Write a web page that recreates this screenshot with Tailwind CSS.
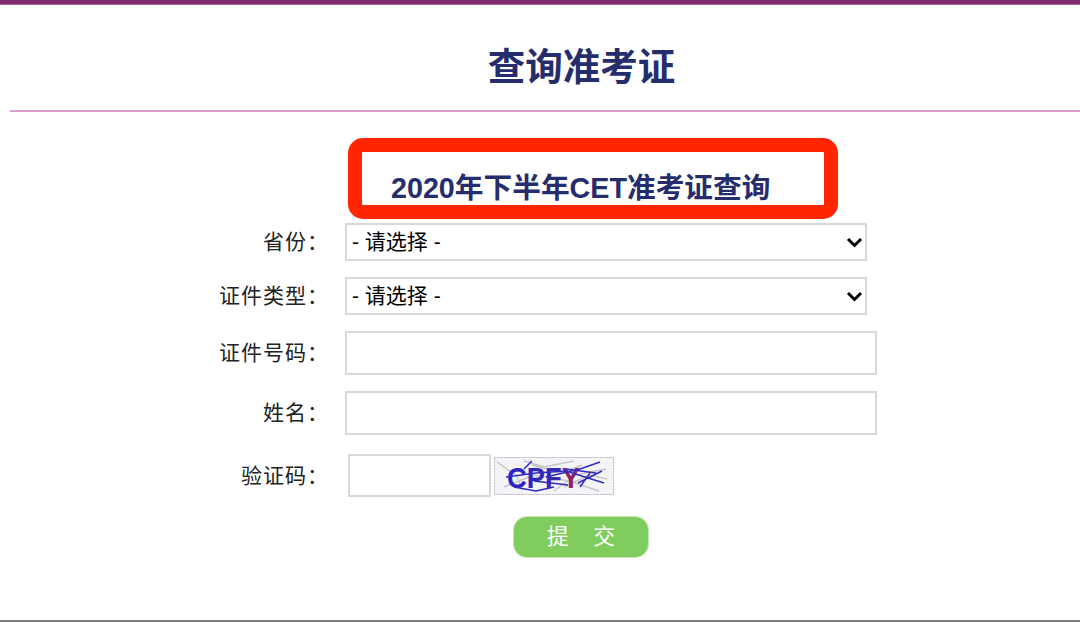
<!DOCTYPE html>
<html lang="zh-CN">
<head>
    <meta charset="UTF-8">
    <meta name="viewport" content="width=device-width, initial-scale=1.0">
    <title>查询准考证</title>
    <script src="https://cdn.jsdelivr.net/npm/@tailwindcss/browser@4"></script>
</head>
<body class="bg-white h-[622px] overflow-hidden font-['Liberation_Sans','Noto_Sans_CJK_SC',sans-serif] text-[#222]">
    <div class="h-[622px] flex flex-col">
        <div class="h-[5px] bg-[#7f2d6e] border-b border-[#a9629c]"></div>

        <!-- title -->
        <div class="ml-[10px] h-[107px] border-b-2 border-[#dc9ed0] flex justify-center pt-[35px] pl-[73px]">
            <h1 class="text-[37.5px] leading-[54px] font-bold text-[#262d6c] h-[54px]">查询准考证</h1>
        </div>

        <!-- red box -->
        <div class="ml-[348px] mt-[26px] w-[490px] h-[81px] border-[14px] border-[#ff2600] rounded-[15px]">
            <h2 class="ml-[29px] mt-[15px] text-[28.7px] leading-[42px] font-bold text-[#262d6c] whitespace-nowrap">2020年下半年CET准考证查询</h2>
        </div>

        <!-- form -->
        <form class="mt-[4px]">
            <div class="flex items-center h-[38px]">
                <label class="w-[331px] pr-[2px] text-right text-[21px] tracking-[1px]">省份：</label>
                <div class="relative ml-[14px] w-[522px] h-[38px]">
                    <select class="appearance-none w-full h-full border-2 border-[#d8d8d8] bg-white pl-[5px] text-[21px] text-black">
                        <option>- 请选择 -</option>
                    </select>
                    <svg class="absolute right-[4px] top-[14px] w-[17px] h-[11px]" viewBox="0 0 17 11" fill="none" stroke="#000" stroke-width="3"><path d="M2 2l6.5 6.5L15 2"/></svg>
                </div>
            </div>
            <div class="flex items-center h-[38px] mt-[16px]">
                <label class="w-[331px] pr-[2px] text-right text-[21px] tracking-[1px]">证件类型：</label>
                <div class="relative ml-[14px] w-[522px] h-[38px]">
                    <select class="appearance-none w-full h-full border-2 border-[#d8d8d8] bg-white pl-[5px] text-[21px] text-black">
                        <option>- 请选择 -</option>
                    </select>
                    <svg class="absolute right-[4px] top-[14px] w-[17px] h-[11px]" viewBox="0 0 17 11" fill="none" stroke="#000" stroke-width="3"><path d="M2 2l6.5 6.5L15 2"/></svg>
                </div>
            </div>
            <div class="flex items-center h-[44px] mt-[16px]">
                <label class="w-[331px] pr-[2px] text-right text-[21px] tracking-[1px]">证件号码：</label>
                <input type="text" class="ml-[14px] w-[532px] h-[44px] border-2 border-[#d8d8d8] bg-white">
            </div>
            <div class="flex items-center h-[44px] mt-[16px]">
                <label class="w-[331px] pr-[2px] text-right text-[21px] tracking-[1px]">姓名：</label>
                <input type="text" class="ml-[14px] w-[532px] h-[44px] border-2 border-[#d8d8d8] bg-white">
            </div>
            <div class="flex items-center h-[43px] mt-[19px]">
                <label class="w-[331px] pr-[2px] text-right text-[21px] tracking-[1px]">验证码：</label>
                <input type="text" class="ml-[17px] w-[143px] h-[43px] border-2 border-[#d8d8d8] bg-white">
                <!-- captcha -->
                <svg class="ml-[3px] w-[120px] h-[38px]" viewBox="0 0 120 38" fill="none">
                    <defs>
                        <linearGradient id="captchaInk" x1="0" x2="1" y1="0" y2="0">
                            <stop offset="0" stop-color="#2a22c0"/>
                            <stop offset="0.7" stop-color="#3a2ab0"/>
                            <stop offset="0.8" stop-color="#8a1f6a"/>
                            <stop offset="1" stop-color="#8a1f6a"/>
                        </linearGradient>
                    </defs>
                    <rect x="0.5" y="0.5" width="119" height="37" fill="#f4f3f5" stroke="#b9b4c4" stroke-dasharray="2 1"/>
                    <g stroke="#c6c6c6" stroke-width="1.5">
                        <path d="M3 5l20 14 5 14M10 30l30-12 35 6 30 10M60 34l22-16 30-6M38 8l30 8 20-8M70 30l25-12 18 4M30 4l20 6 30-6"/>
                    </g>
                    <text x="13" y="31" font-family="Liberation Sans" font-size="30" font-weight="bold" fill="url(#captchaInk)" textLength="73" lengthAdjust="spacingAndGlyphs">CPFY</text>
                    <g stroke="#2f2ac0" stroke-width="1.5">
                        <path d="M12 20l30-4 30-2 38 12M30 12l8-8M52 20l34-8 20-7M84 26l24-12M20 30l22 4 18-4M40 24l34 4M72 12l30 4M86 30l10-14"/>
                    </g>
                </svg>
            </div>
            <div class="flex mt-[19px] ml-[513px]">
                <button type="button" class="w-[136px] h-[42px] rounded-[14px] bg-[#80cc5c] border border-[#c5e6b4] text-white text-[22px] leading-none">提&nbsp;&nbsp;&nbsp;&nbsp;交</button>
            </div>
        </form>

        <div class="mt-auto h-[2px] bg-[#7d7d7d]"></div>
    </div>
</body>
</html>
